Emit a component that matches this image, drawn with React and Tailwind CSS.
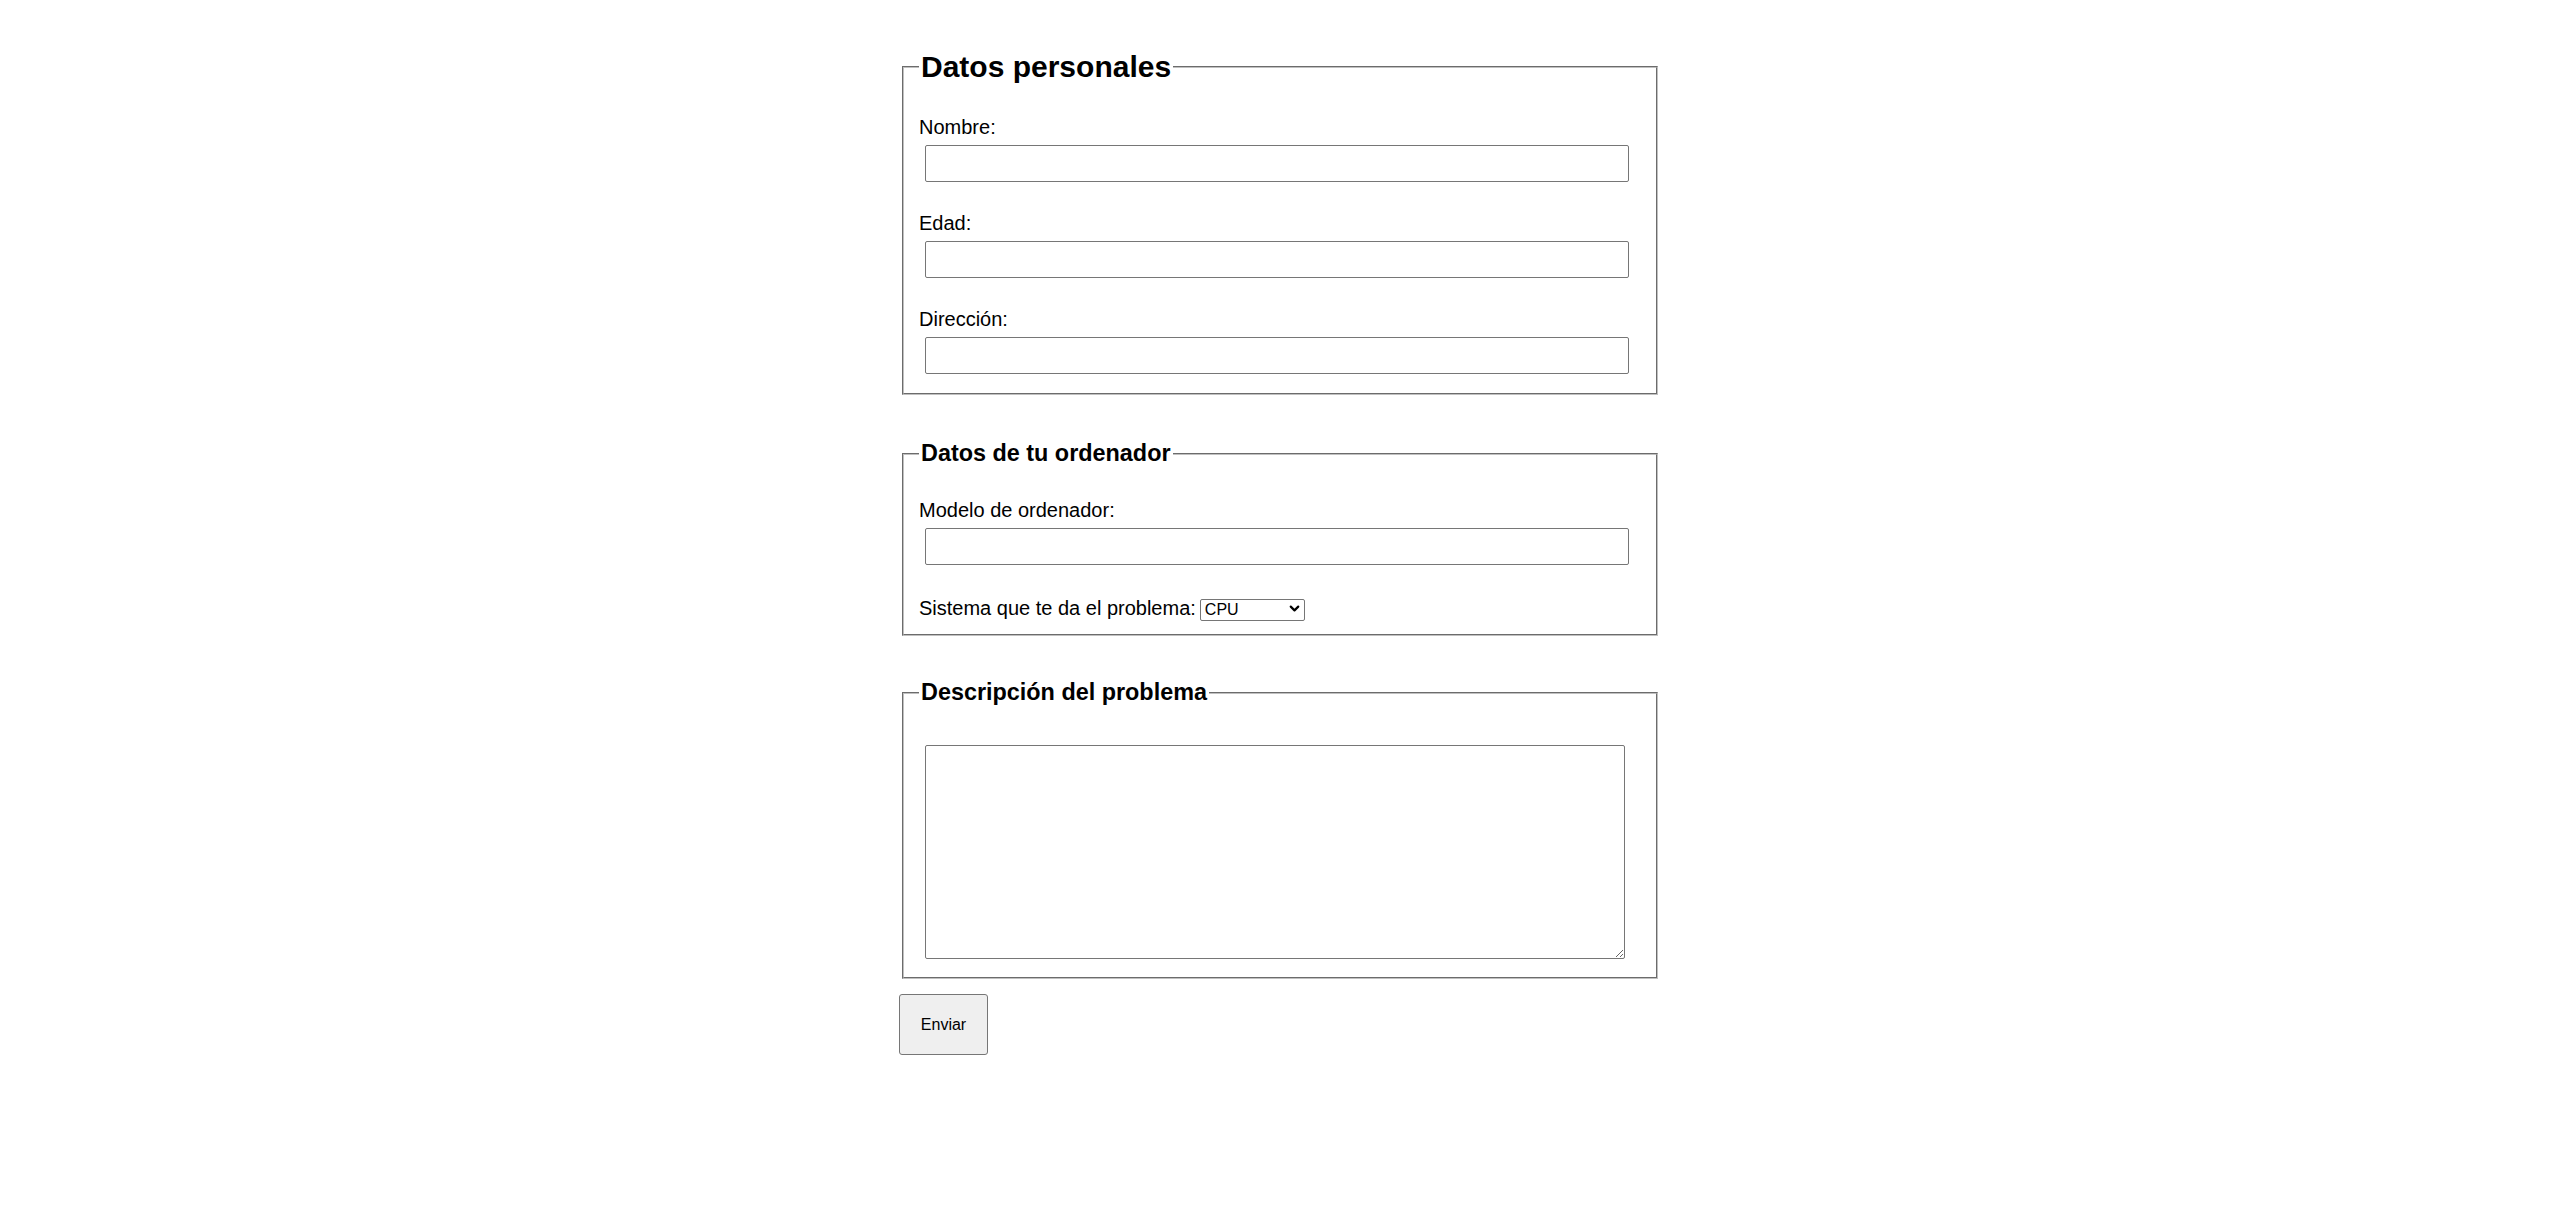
import React from 'react';
import { ChevronDown } from 'lucide-react';

const fieldsetCls = "mx-[3px] min-w-0 border-2 [border-style:groove] border-[#c0c0c0] px-[15px]";
const inputCls = "block ml-[6px] w-[704px] h-[37px] border border-[#767676] rounded-[2px] bg-white";

// One label line with its text box underneath
const Field = ({ label, first }) => (
    <div className={first ? "pt-[32px]" : "pt-[30px]"}>
        <label className="block leading-[23px]">{label}</label>
        <input type="text" className={`${inputCls} mt-[6px]`} />
    </div>
);

export default function App() {
    return (
        <div className="min-h-screen bg-white text-black font-['Liberation_Sans',Arial,sans-serif] text-[20px]">
            <form className="w-[762px] mx-auto pt-[50px]">
                <fieldset className={`${fieldsetCls} pb-[19px]`}>
                    <legend className="px-[2px] text-[30px] font-bold leading-[34px]">Datos personales</legend>
                    <Field label="Nombre:" first />
                    <Field label="Edad:" />
                    <Field label="Dirección:" />
                </fieldset>

                <fieldset className={`${fieldsetCls} mt-[45px] pb-[14px]`}>
                    <legend className="px-[2px] text-[23.4px] font-bold leading-[27px]">Datos de tu ordenador</legend>
                    <Field label="Modelo de ordenador:" first />
                    <div className="pt-[32px] flex items-center h-[55px] leading-[23px]">
                        <span>Sistema que te da el problema:</span>
                        <div className="relative ml-[4px]">
                            <select className="appearance-none w-[105px] h-[22px] border border-[#767676] rounded-[2px] bg-white pl-[4px] text-[16px] leading-[20px] text-black">
                                <option>CPU</option>
                                <option>Monitor</option>
                                <option>Teclado</option>
                                <option>Ratón</option>
                            </select>
                            <ChevronDown className="absolute right-[3px] top-[4px] w-[15px] h-[15px] pointer-events-none" strokeWidth={3.5} />
                        </div>
                    </div>
                </fieldset>

                <fieldset className={`${fieldsetCls} mt-[43px] pb-[18px]`}>
                    <legend className="px-[2px] text-[23.4px] font-bold leading-[27px]">Descripción del problema</legend>
                    <textarea className="block mt-[39px] ml-[6px] w-[700px] h-[214px] border border-[#767676] rounded-[2px] bg-white" />
                </fieldset>

                <button type="submit" className="mt-[15px] w-[89px] h-[61px] bg-[#efefef] border border-[#767676] rounded-[3px] text-[16px] text-black">
                    Enviar
                </button>
            </form>
        </div>
    );
}
